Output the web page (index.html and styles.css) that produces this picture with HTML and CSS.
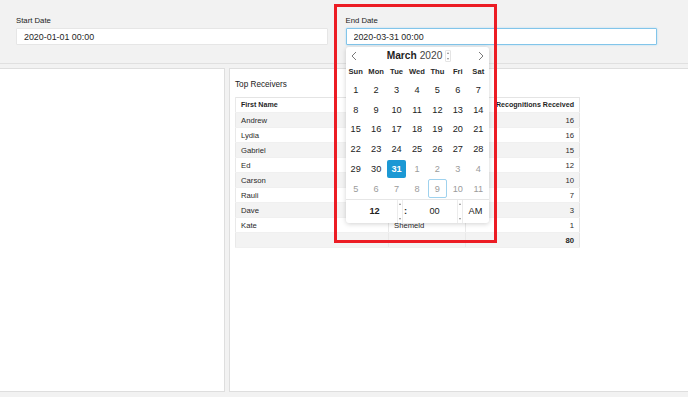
FILE: index.html
```html
<!DOCTYPE html>
<html lang="en">
<head>
    <meta charset="UTF-8">
    <meta name="viewport" content="width=device-width, initial-scale=1.0">
    <title>Recognitions Dashboard</title>
    <link rel="stylesheet" href="styles.css">
</head>
<body>
    <div class="filters">
        <div class="field">
            <label for="startDate">Start Date</label>
            <input type="text" class="date-input" id="startDate" value="2020-01-01 00:00">
        </div>
        <div class="field">
            <label for="endDate">End Date</label>
            <input type="text" class="date-input active" id="endDate" value="2020-03-31 00:00">

            <div class="picker">
                <div class="picker-head">
                    <svg class="nav" width="6" height="10" viewBox="0 0 6 10"><polyline points="5,1 1,5 5,9" fill="none" stroke="#7a7a7a" stroke-width="1"/></svg>
                    <div class="picker-title">
                        <span class="month">March</span>
                        <span class="year">2020</span>
                        <span class="spin"><i class="up"></i><i class="down"></i></span>
                    </div>
                    <svg class="nav" width="6" height="10" viewBox="0 0 6 10"><polyline points="1,1 5,5 1,9" fill="none" stroke="#7a7a7a" stroke-width="1"/></svg>
                </div>
                <div class="weekdays">
                    <span>Sun</span><span>Mon</span><span>Tue</span><span>Wed</span><span>Thu</span><span>Fri</span><span>Sat</span>
                </div>
                <div class="days">
                    <span class="day">1</span><span class="day">2</span><span class="day">3</span><span class="day">4</span><span class="day">5</span><span class="day">6</span><span class="day">7</span>
                    <span class="day">8</span><span class="day">9</span><span class="day">10</span><span class="day">11</span><span class="day">12</span><span class="day">13</span><span class="day">14</span>
                    <span class="day">15</span><span class="day">16</span><span class="day">17</span><span class="day">18</span><span class="day">19</span><span class="day">20</span><span class="day">21</span>
                    <span class="day">22</span><span class="day">23</span><span class="day">24</span><span class="day">25</span><span class="day">26</span><span class="day">27</span><span class="day">28</span>
                    <span class="day">29</span><span class="day">30</span><span class="day selected">31</span><span class="day muted">1</span><span class="day muted">2</span><span class="day muted">3</span><span class="day muted">4</span>
                    <span class="day muted">5</span><span class="day muted">6</span><span class="day muted">7</span><span class="day muted">8</span><span class="day muted today">9</span><span class="day muted">10</span><span class="day muted">11</span>
                </div>
                <div class="time">
                    <span class="time-hour">12</span>
                    <span class="time-spin"><i class="up"></i><i class="down"></i></span>
                    <span class="time-colon">:</span>
                    <span class="time-min">00</span>
                    <span class="time-spin"><i class="up"></i><i class="down"></i></span>
                    <span class="time-ampm">AM</span>
                </div>
            </div>
        </div>
    </div>

    <div class="sheet">
        <div class="panel panel-left"></div>
        <div class="panel panel-right">
            <h2>Top Receivers</h2>
            <!-- last name cells sit under the open date picker -->
            <table class="receivers">
                <thead>
                    <tr><th>First Name</th><th></th><th class="num">Recognitions Received</th></tr>
                </thead>
                <tbody>
                    <tr><td>Andrew</td><td></td><td class="num">16</td></tr>
                    <tr><td>Lydia</td><td></td><td class="num">16</td></tr>
                    <tr><td>Gabriel</td><td></td><td class="num">15</td></tr>
                    <tr><td>Ed</td><td></td><td class="num">12</td></tr>
                    <tr><td>Carson</td><td></td><td class="num">10</td></tr>
                    <tr><td>Rauli</td><td></td><td class="num">7</td></tr>
                    <tr><td>Dave</td><td></td><td class="num">3</td></tr>
                    <tr><td>Kate</td><td>Shemeld</td><td class="num">1</td></tr>
                </tbody>
                <tfoot>
                    <tr><td></td><td></td><td class="num">80</td></tr>
                </tfoot>
            </table>
        </div>
    </div>

    <div class="highlight"></div>
</body>
</html>
```

FILE: styles.css
```css
* {
    box-sizing: border-box;
}
body {
    margin: 0;
    height: 397px;
    overflow: hidden;
    font-family: "Liberation Sans", Arial, sans-serif;
    background-color: #f2f2f2;
    color: #1f1f1f;
}

/* date filters */
.filters {
    display: grid;
    grid-template-columns: 1fr 1fr;
    column-gap: 18px;
    height: 64px;
    padding: 16px 31px 0 16px;
    border-bottom: 1px solid #e0e0e0;
}
.field {
    position: relative;
}
.field label {
    display: block;
    font-size: 7.75px;
    line-height: 10px;
    color: #222;
    margin-bottom: 2px;
}
.date-input {
    display: block;
    width: 100%;
    height: 17px;
    margin: 0;
    padding: 0 7px;
    border: 1px solid #e6e6e6;
    border-radius: 1px;
    background-color: #fff;
    font-family: inherit;
    font-size: 8.9px;
    color: #1f1f1f;
    outline: none;
}
.date-input.active {
    border-color: #82c5ea;
    box-shadow: 0 0 2px #a9d8f2;
}

/* calendar popup */
.picker {
    position: absolute;
    top: 31px;
    left: 0;
    width: 143px;
    background-color: #fff;
    border-radius: 3px;
    box-shadow: 0 1px 5px rgba(0,0,0,0.18);
    z-index: 2;
}
.picker-head {
    display: flex;
    align-items: center;
    justify-content: space-between;
    height: 17px;
    padding: 0 5px;
}
.picker-title {
    display: flex;
    align-items: center;
    margin-left: 4px;
    font-size: 10.2px;
}
.month {
    font-weight: bold;
    color: #1f1f1f;
}
.year {
    margin-left: 3px;
    color: #444;
}
.spin {
    display: flex;
    flex-direction: column;
    justify-content: space-between;
    align-items: center;
    width: 6px;
    height: 12px;
    margin-left: 3px;
    padding: 1px 0;
    border: 1px solid #e4e4e4;
    border-radius: 1px;
}
.spin i,
.time-spin i {
    width: 0;
    height: 0;
    border-left: 1.5px solid transparent;
    border-right: 1.5px solid transparent;
}
.spin .up,
.time-spin .up {
    border-bottom: 2px solid #8a8a8a;
}
.spin .down,
.time-spin .down {
    border-top: 2px solid #8a8a8a;
}
.weekdays {
    display: grid;
    grid-template-columns: repeat(7, 1fr);
    height: 14px;
    align-items: center;
    text-align: center;
    font-size: 7.6px;
    font-weight: bold;
    color: #2a2a2a;
}
.days {
    display: grid;
    grid-template-columns: repeat(7, 1fr);
    grid-auto-rows: 19.75px;
    padding-top: 2px;
}
.day {
    display: flex;
    align-items: center;
    justify-content: center;
    margin: 0.5px;
    font-size: 9.2px;
    color: #222;
    border-radius: 2px;
}
.day.muted {
    color: #9b9b9b;
}
.day.selected {
    background-color: #1b98d4;
    color: #fff;
    font-weight: bold;
}
.day.today {
    border: 1px solid #9fd2ee;
}
.time {
    display: flex;
    height: 24px;
    border-top: 1px solid #e6e6e6;
    font-size: 9.2px;
    color: #222;
}
.time span {
    display: flex;
    align-items: center;
    justify-content: center;
}
.time-hour {
    width: 51px;
    padding-left: 7px;
    font-weight: bold;
}
.time-spin {
    flex-direction: column;
    justify-content: space-between !important;
    width: 6px;
    padding: 3px 0;
    border-left: 1px solid #ececec;
    border-right: 1px solid #ececec;
}
.time-colon {
    width: 6px;
    font-weight: bold;
}
.time-min {
    width: 48px;
    padding-left: 4px;
}
.time-ampm {
    flex: 1;
}

/* sheet panels */
.sheet {
    display: grid;
    grid-template-columns: 225px 1fr;
    column-gap: 4px;
    height: 324px;
    margin-top: 4px;
}
.panel {
    background-color: #fff;
    border: 1px solid #dedede;
}
.panel-left {
    border-left: none;
}
.panel-right {
    border-right: none;
    padding: 10px 5px 0 5px;
}
.panel-right h2 {
    margin: 0 0 6px;
    font-size: 8.2px;
    line-height: 12px;
    font-weight: normal;
    color: #222;
}
.receivers {
    width: 345px;
    border-collapse: collapse;
    border: 1px solid #e4e4e4;
    font-size: 7.7px;
    color: #2a2a2a;
}
.receivers th,
.receivers td {
    height: 15px;
    padding: 0 5px;
    text-align: left;
    border-left: 1px solid #e9e9e9;
    border-bottom: 1px solid #f0f0f0;
    white-space: nowrap;
}
.receivers th {
    font-size: 7.1px;
    font-weight: bold;
    color: #1f1f1f;
}
.receivers th:nth-child(1) { width: 153px; }
.receivers th:nth-child(2) { width: 77px; }
.receivers .num {
    text-align: right;
}
.receivers tbody tr:nth-child(odd),
.receivers tfoot tr {
    background-color: #f3f3f3;
}
.receivers tfoot td {
    font-weight: bold;
    color: #1f1f1f;
}

/* annotation box */
.highlight {
    position: absolute;
    left: 334px;
    top: 4px;
    width: 163px;
    height: 239px;
    border: 3px solid #ec1c24;
    z-index: 3;
}
```
